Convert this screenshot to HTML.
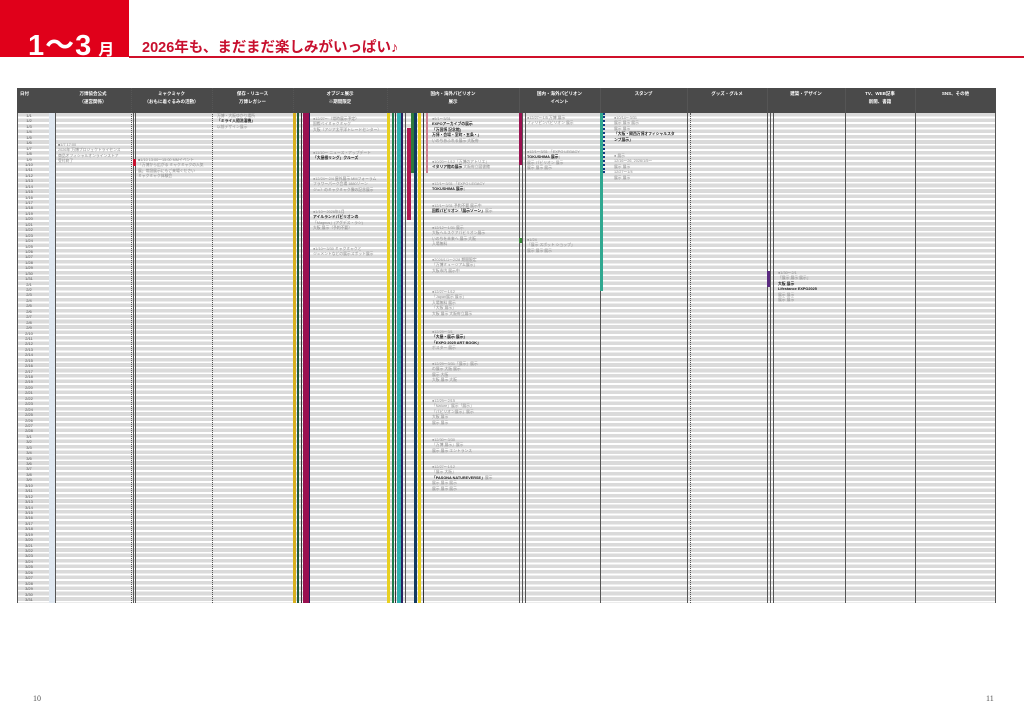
<!DOCTYPE html>
<html><head><meta charset="utf-8">
<style>
*{margin:0;padding:0;box-sizing:border-box}
body{width:1024px;height:724px;background:#fff;position:relative;overflow:hidden;font-family:"Liberation Sans","Noto Sans CJK JP",sans-serif}
.a{position:absolute}
.red{left:0;top:0;width:129px;height:57px;background:#e0001a}
.t1{left:28px;top:22px;color:#fff;font-size:29px;font-weight:bold;letter-spacing:1px}
.t1 small{font-size:16px;margin-left:6px}
.t2{left:142px;top:36px;color:#c8102e;font-size:14.5px;font-weight:bold}
.line{left:129px;top:56px;width:895px;height:2px;background:#d0102a}
.hdr{left:17px;top:88px;width:979px;height:25px;background:#4a4a4a}
.h{position:absolute;top:90px;color:#fff;font-size:4.5px;text-align:center;line-height:8px;font-weight:bold}
.rows{left:17px;top:113px;width:979px;height:490px;background:repeating-linear-gradient(to bottom,#dadada 0,#dadada 3.6px,#fff 3.6px,#fff 5.44px)}
.vl{position:absolute;top:88px;height:515px;width:1px;background:#555}
.vd{position:absolute;top:88px;height:515px;width:1px;border-left:1px dotted #555}
.dates{left:19px;top:113px;font-size:4px;line-height:5.44px;color:#555;width:20px;text-align:center}
.dow{left:41px;top:113px;font-size:3.5px;line-height:5.44px;color:#777}
.num{left:49px;top:113px;width:6px;height:490px;background:#dfe7f0}
.b{position:absolute}
.tx{position:absolute;font-size:3.8px;line-height:5.44px;color:#8a8a8a;white-space:nowrap}
.tx b{color:#222}
.pg{font-family:"Liberation Serif",serif;font-size:8px;color:#555}
</style></head><body>
<div class="a red"></div>
<div class="a t1">1〜3<small>月</small></div>
<div class="a t2">2026年も、まだまだ楽しみがいっぱい♪</div>
<div class="a line"></div>

<div class="a rows"></div>
<div class="a num"></div>
<div class="a hdr"></div>
<div class="h" style="left:20px;text-align:left">日付</div>
<div class="h" style="left:55px;width:76px">万博協会公式<br>（運営関係）</div>
<div class="h" style="left:131px;width:81px">ミャクミャク<br>（おもに着ぐるみの活動）</div>
<div class="h" style="left:212px;width:81px">保存・リユース<br>万博レガシー</div>
<div class="h" style="left:293px;width:94px">オブジェ展示<br>※期間限定</div>
<div class="h" style="left:387px;width:132px">国内・海外パビリオン<br>展示</div>
<div class="h" style="left:519px;width:81px">国内・海外パビリオン<br>イベント</div>
<div class="h" style="left:600px;width:87px">スタンプ</div>
<div class="h" style="left:687px;width:80px">グッズ・グルメ</div>
<div class="h" style="left:767px;width:78px">建築・デザイン</div>
<div class="h" style="left:845px;width:70px">TV、WEB記事<br>新聞、書籍</div>
<div class="h" style="left:915px;width:81px">SNS、その他</div>

<div class="vl" style="left:17px;top:113px;height:490px"></div>
<div class="vl" style="left:55px;top:113px;height:490px"></div>
<div class="vd" style="left:131px"></div><div class="vl" style="left:133px;top:113px;height:490px"></div><div class="vl" style="left:135px;top:113px;height:490px"></div>
<div class="vd" style="left:212px"></div>
<div class="vd" style="left:293px"></div>
<div class="vd" style="left:387px"></div>
<div class="vl" style="left:519px;background:#555"></div><div class="vl" style="left:522px;top:113px;height:490px"></div><div class="vl" style="left:525px;top:113px;height:490px"></div>
<div class="vl" style="left:600px"></div>
<div class="vl" style="left:687px"></div><div class="vd" style="left:690px;top:113px;height:490px"></div>
<div class="vl" style="left:767px"></div><div class="vl" style="left:770px;top:113px;height:490px"></div><div class="vl" style="left:773px;top:113px;height:490px"></div>
<div class="vl" style="left:845px"></div>
<div class="vl" style="left:915px"></div>
<div class="vl" style="left:995px;top:113px;height:490px"></div>

<!-- objet bars -->
<div class="b" style="left:293px;top:113px;width:3px;height:490px;background:#d8b020"></div>
<div class="b" style="left:297px;top:113px;width:2px;height:490px;background:#1e5a3c"></div>
<div class="b" style="left:301px;top:113px;width:1px;height:490px;background:#333"></div>
<div class="b" style="left:303px;top:113px;width:6px;height:490px;background:#9a1050"></div>
<div class="b" style="left:309px;top:113px;width:1px;height:490px;background:#2a2060"></div>
<!-- domestic bars -->
<div class="b" style="left:387px;top:113px;width:3px;height:490px;background:#e8d020"></div>
<div class="b" style="left:392px;top:113px;width:2px;height:490px;background:#1e7a4c"></div>
<div class="b" style="left:395px;top:113px;width:1px;height:490px;background:#333"></div>
<div class="b" style="left:397px;top:113px;width:4px;height:490px;background:#30b0b0"></div>
<div class="b" style="left:401px;top:113px;width:2px;height:490px;background:#2a2060"></div>
<div class="b" style="left:405px;top:113px;width:1px;height:490px;background:#555"></div>
<div class="b" style="left:407px;top:128px;width:4px;height:92px;background:#b01850"></div>
<div class="b" style="left:411px;top:113px;width:3px;height:60px;background:#2e7a3c"></div>
<div class="b" style="left:414px;top:113px;width:3px;height:490px;background:#123a60"></div>
<div class="b" style="left:418px;top:113px;width:3px;height:490px;background:#e8d020"></div>
<div class="b" style="left:423px;top:113px;width:1px;height:490px;background:#333"></div>
<div class="b" style="left:426px;top:113px;width:2px;height:60px;background:#d08090"></div>
<!-- event -->
<div class="b" style="left:519px;top:113px;width:3px;height:52px;background:#9a1050"></div>
<div class="b" style="left:519px;top:238px;width:3px;height:5px;background:#3a8a3a"></div>
<!-- stamp -->
<div class="b" style="left:600px;top:113px;width:3px;height:178px;background:#30a890"></div>
<div class="b" style="left:603px;top:113px;width:2px;height:60px;border-left:2px dotted #123a80"></div>
<!-- arch -->
<div class="b" style="left:767px;top:271px;width:3px;height:16px;background:#5a2a80"></div>
<!-- mmk red -->
<div class="b" style="left:133px;top:159px;width:3px;height:7px;background:#c8102e"></div>

<div class="a dates">1/1<br>1/2<br>1/3<br>1/4<br>1/5<br>1/6<br>1/7<br>1/8<br>1/9<br>1/10<br>1/11<br>1/12<br>1/13<br>1/14<br>1/15<br>1/16<br>1/17<br>1/18<br>1/19<br>1/20<br>1/21<br>1/22<br>1/23<br>1/24<br>1/25<br>1/26<br>1/27<br>1/28<br>1/29<br>1/30<br>1/31<br>2/1<br>2/2<br>2/3<br>2/4<br>2/5<br>2/6<br>2/7<br>2/8<br>2/9<br>2/10<br>2/11<br>2/12<br>2/13<br>2/14<br>2/15<br>2/16<br>2/17<br>2/18<br>2/19<br>2/20<br>2/21<br>2/22<br>2/23<br>2/24<br>2/25<br>2/26<br>2/27<br>2/28<br>3/1<br>3/2<br>3/3<br>3/4<br>3/5<br>3/6<br>3/7<br>3/8<br>3/9<br>3/10<br>3/11<br>3/12<br>3/13<br>3/14<br>3/15<br>3/16<br>3/17<br>3/18<br>3/19<br>3/20<br>3/21<br>3/22<br>3/23<br>3/24<br>3/25<br>3/26<br>3/27<br>3/28<br>3/29<br>3/30<br>3/31</div>

<div class="tx" style="left:58px;top:143px">■1/7 17:00<br>2026年 万博プロジェクトライセンス<br>商品オフィシャルオンラインストア<br>受付終了</div>
<div class="tx" style="left:138px;top:158px">■1/10 13:00～15:00 MMイベント<br>「万博から広がる ミャクミャクの人気<br>展」常設展示にもご来場ください<br>ミャクミャク体験会</div>
<div class="tx" style="left:217px;top:114px">万博・大阪ゆかり場所<br><b>「ミライ人間洗濯機」</b><br>以前デザイン展示</div>
<div class="tx" style="left:313px;top:117px">●12/27～（常時展示予定）<br>国際ベイミャクミャク<br>大阪（アジア太平洋トレードセンター）</div>
<div class="tx" style="left:313px;top:151px">●11/10～ ニュース・アップデート<br><b>「大屋根リング」クルーズ</b></div>
<div class="tx" style="left:313px;top:177px">●12/24～2/4 屋外展示 MMフォーラム<br>フラワーパーク会場 1880ゾーン<br>ジュ）のミャクミャク像の記念展示</div>
<div class="tx" style="left:313px;top:210px">●1/10～2026年1月<br><b>アイルランドパビリオンの</b><br>「Magnus」(アグデス・ラシ)<br>大阪 展示（予約不要）</div>
<div class="tx" style="left:313px;top:247px">●1/10～3/30 ミャクミャクと<br>ジュメントなどの展示スポット展示</div>
<div class="tx" style="left:432px;top:117px">●9/1～3/31<br><b>EXPOアーカイブの展示</b><br><b>「万国博 記念館」</b><br><b>万博・会場・室町・五条・」</b><br>いのちあふれる展示 大阪府</div>
<div class="tx" style="left:432px;top:160px">●10/20～1/12「万博のアトリエ」<br><b>イタリア館の展示</b> 大阪府立図書館</div>
<div class="tx" style="left:432px;top:182px">●12/1～3/31 「EXPO LEGACY<br><b>TOKUSHIMA 展示</b>」</div>
<div class="tx" style="left:432px;top:204px">●12/1～3/31 予約不要 展示中<br><b>国際パビリオン「展示ゾーン」</b>展示</div>
<div class="tx" style="left:432px;top:226px">●12/12～1/31 展示<br>大阪ヘルスケアパビリオン展示<br>いのちを未来へ 展示 大阪<br>入場無料</div>
<div class="tx" style="left:432px;top:258px">●2026/1/1～2/28 期間限定<br>「万博ミュージアム展示」<br>大阪市内 展示中</div>
<div class="tx" style="left:432px;top:290px">●12/27～1/12<br>「Japan展示 展示」<br>入場無料 展示<br>「大阪 展示」<br>大阪 展示 大阪府立展示</div>
<div class="tx" style="left:432px;top:330px">●12/29～3/1<br><b>「大屋・展示 展示」</b><br><b>「EXPO 2025 ART BOOK」</b><br>ポスター 展示</div>
<div class="tx" style="left:432px;top:362px">●12/29～3/31「展示」展示<br>の展示 大阪 展示<br>展示 大阪<br>大阪 展示 大阪</div>
<div class="tx" style="left:432px;top:399px">●12/29～2/15<br>「Nature」展示「展示」<br>「パビリオン展示」展示<br>大阪 展示<br>展示 展示</div>
<div class="tx" style="left:432px;top:438px">●12/30～3/30<br>「万博 展示」展示<br>展示 展示 エントランス</div>
<div class="tx" style="left:432px;top:465px">●12/27～1/12<br>「展示 大阪」<br><b>「PASONA NATUREVERSE」</b>展示<br>展示 展示 展示<br>展示 展示 展示</div>
<div class="tx" style="left:527px;top:116px">●12/27～1/5 万博 展示<br>フィリピンパビリオン 展示</div>
<div class="tx" style="left:527px;top:150px">●12/1～3/31 「EXPO LEGACY<br><b>TOKUSHIMA 展示</b>」<br>展示 パビリオン 展示<br>展示 展示 展示</div>
<div class="tx" style="left:527px;top:238px">●1/24<br>「展示 スポット ショップ」<br>展示 展示 展示</div>
<div class="tx" style="left:614px;top:116px">●10/14～3/31<br>展示 展示 展示<br>展示 展示<br><b>「大阪・関西万博オフィシャルスタ</b><br><b>ンプ展示」</b></div>
<div class="tx" style="left:614px;top:154px">● 展示<br>12/16～26, 2026/1/5～<br>展示 展示<br>12/27～1/4<br>展示 展示</div>
<div class="tx" style="left:778px;top:271px">●1/30～2/1<br>「展示 展示 展示」<br><b>大阪 展示</b><br><b>Lifestance EXPO2025</b><br>展示 展示<br>展示 展示</div>

<div class="a pg" style="left:33px;top:694px">10</div>
<div class="a pg" style="left:986px;top:694px">11</div>
</body></html>
